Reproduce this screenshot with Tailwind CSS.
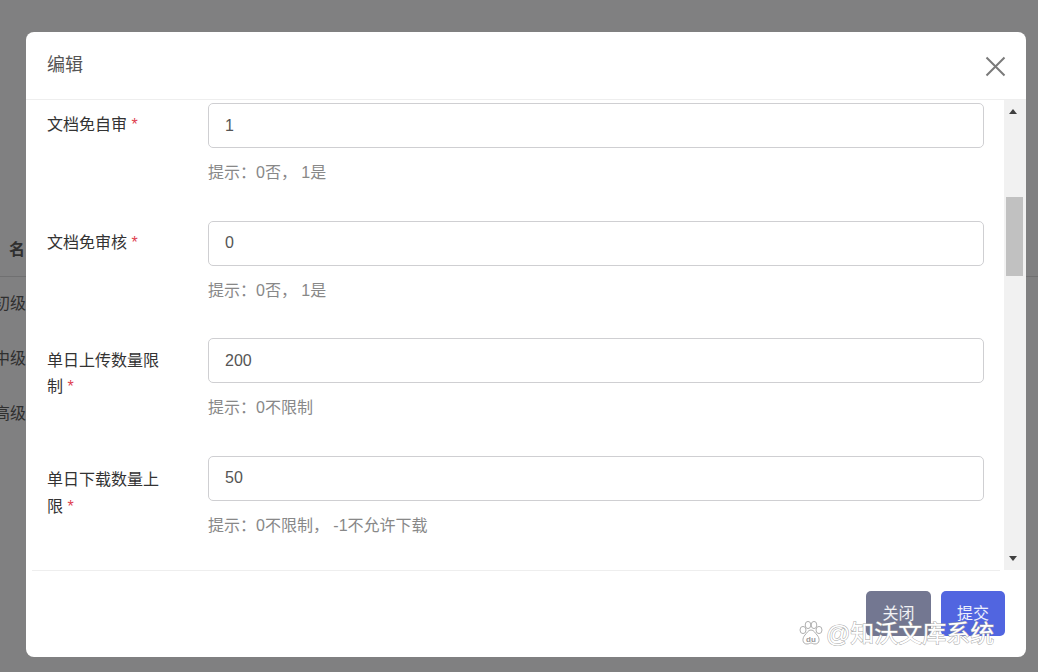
<!DOCTYPE html>
<html lang="zh-CN">
<head>
    <meta charset="UTF-8">
    <meta name="viewport" content="width=device-width, initial-scale=1.0">
    <title>编辑</title>
    <script src="https://cdn.jsdelivr.net/npm/@tailwindcss/browser@4"></script>
</head>
<body class="relative h-[672px] w-[1038px] overflow-hidden bg-[#808081] font-['Liberation_Sans','Noto_Sans_CJK_SC',sans-serif] text-base">
    <!-- page behind the dialog -->
    <div class="pt-[236px] text-[#2f2f2f]">
        <div class="h-[41px] border-b border-[#707071] pl-[9px] font-bold leading-[28px]">名</div>
        <div class="flex flex-col gap-[31px] pt-[15px] pl-[26px] leading-[24px]">
            <div class="-ml-[32px]">初级</div>
            <div class="-ml-[32px]">中级</div>
            <div class="-ml-[32px]">高级</div>
        </div>
    </div>

    <!-- dialog -->
    <div class="absolute left-[26px] top-[32px] flex h-[625px] w-[1000px] flex-col overflow-hidden rounded-[8px] bg-white">
        <div class="flex h-[68px] shrink-0 items-center justify-between border-b border-[#eeeeee] pl-[21px] pr-[20px]">
            <span class="text-[18px] text-[#555555]">编辑</span>
            <svg class="mt-[2px]" width="21" height="21" viewBox="0 0 21 21" fill="none" stroke="#7a7a7a" stroke-width="2"><path d="M1.5 1.5l18 18M19.5 1.5l-18 18"/></svg>
        </div>

        <div class="flex h-[470px] shrink-0">
            <div class="w-[978px] overflow-hidden pt-[3px] pl-[21px] pr-[20px]">
                <div class="flex h-[117.6px] gap-[37px]">
                    <div class="w-[124px] pt-[9px] leading-[26px] text-[#333333]">文档免自审 <span class="text-[#e04050]">*</span></div>
                    <div class="flex-1">
                        <div class="flex h-[45px] items-center rounded-[5px] border border-[#cfcfd2] pl-[16px] text-[#555555]">1</div>
                        <p class="mt-[13px] leading-[24px] text-[#888888]">提示：0否， 1是</p>
                    </div>
                </div>
                <div class="flex h-[117.6px] gap-[37px]">
                    <div class="w-[124px] pt-[9px] leading-[26px] text-[#333333]">文档免审核 <span class="text-[#e04050]">*</span></div>
                    <div class="flex-1">
                        <div class="flex h-[45px] items-center rounded-[5px] border border-[#cfcfd2] pl-[16px] text-[#555555]">0</div>
                        <p class="mt-[13px] leading-[24px] text-[#888888]">提示：0否， 1是</p>
                    </div>
                </div>
                <div class="flex h-[117.6px] gap-[37px]">
                    <div class="w-[124px] pt-[10px] leading-[26px] text-[#333333]">单日上传数量限制 <span class="text-[#e04050]">*</span></div>
                    <div class="flex-1">
                        <div class="flex h-[45px] items-center rounded-[5px] border border-[#cfcfd2] pl-[16px] text-[#555555]">200</div>
                        <p class="mt-[13px] leading-[24px] text-[#888888]">提示：0不限制</p>
                    </div>
                </div>
                <div class="flex h-[117.6px] gap-[37px]">
                    <div class="w-[124px] pt-[10px] leading-[27px] text-[#333333]">单日下载数量上限 <span class="text-[#e04050]">*</span></div>
                    <div class="flex-1">
                        <div class="flex h-[45px] items-center rounded-[5px] border border-[#cfcfd2] pl-[16px] text-[#555555]">50</div>
                        <p class="mt-[13px] leading-[24px] text-[#888888]">提示：0不限制， -1不允许下载</p>
                    </div>
                </div>
            </div>

            <!-- scrollbar -->
            <div class="relative w-[22px] bg-[#f1f1f1]">
                <div class="absolute left-[5px] top-[9px] h-0 w-0 border-x-[4.5px] border-b-[5px] border-x-transparent border-b-[#404040]"></div>
                <div class="absolute left-[2px] top-[97px] h-[79px] w-[17px] bg-[#c1c1c1]"></div>
                <div class="absolute left-[5px] bottom-[9px] h-0 w-0 border-x-[4.5px] border-t-[5px] border-x-transparent border-t-[#404040]"></div>
            </div>
        </div>

        <div class="mx-[6px] mr-[26px] border-t border-[#eeeeee]"></div>
        <div class="flex justify-end gap-[10px] pt-[20px] pr-[21px]">
            <button class="h-[45px] w-[65px] rounded-[5px] bg-[#737791] text-white/90">关闭</button>
            <button class="h-[45px] w-[64px] rounded-[5px] bg-[#5165e0] text-white/90">提交</button>
        </div>
    </div>

    <!-- watermark -->
    <div class="absolute left-[798px] top-[620px] flex items-center gap-[3px]">
        <svg width="25" height="28" viewBox="0 0 25 28" fill="#ffffff" stroke="#b0b0b0" stroke-width="1">
            <ellipse cx="5" cy="10" rx="3" ry="3.6"/>
            <ellipse cx="10" cy="5" rx="2.8" ry="3.6"/>
            <ellipse cx="16" cy="5" rx="2.8" ry="3.6"/>
            <ellipse cx="21" cy="10" rx="3" ry="3.6"/>
            <path d="M13 10c3 0 4 3 6 5 3 3 3 9-2 9-2 0-3-1-4-1s-2 1-4 1c-5 0-5-6-2-9 2-2 3-5 6-5z"/>
            <text x="13" y="22" text-anchor="middle" font-size="8" font-weight="700" fill="#9a9a9a" stroke="none">du</text>
        </svg>
        <span class="text-[24px] leading-[28px] text-white [-webkit-text-stroke:1px_#a8a8a8] [paint-order:stroke_fill]">@知沃文库系统</span>
    </div>
</body>
</html>
